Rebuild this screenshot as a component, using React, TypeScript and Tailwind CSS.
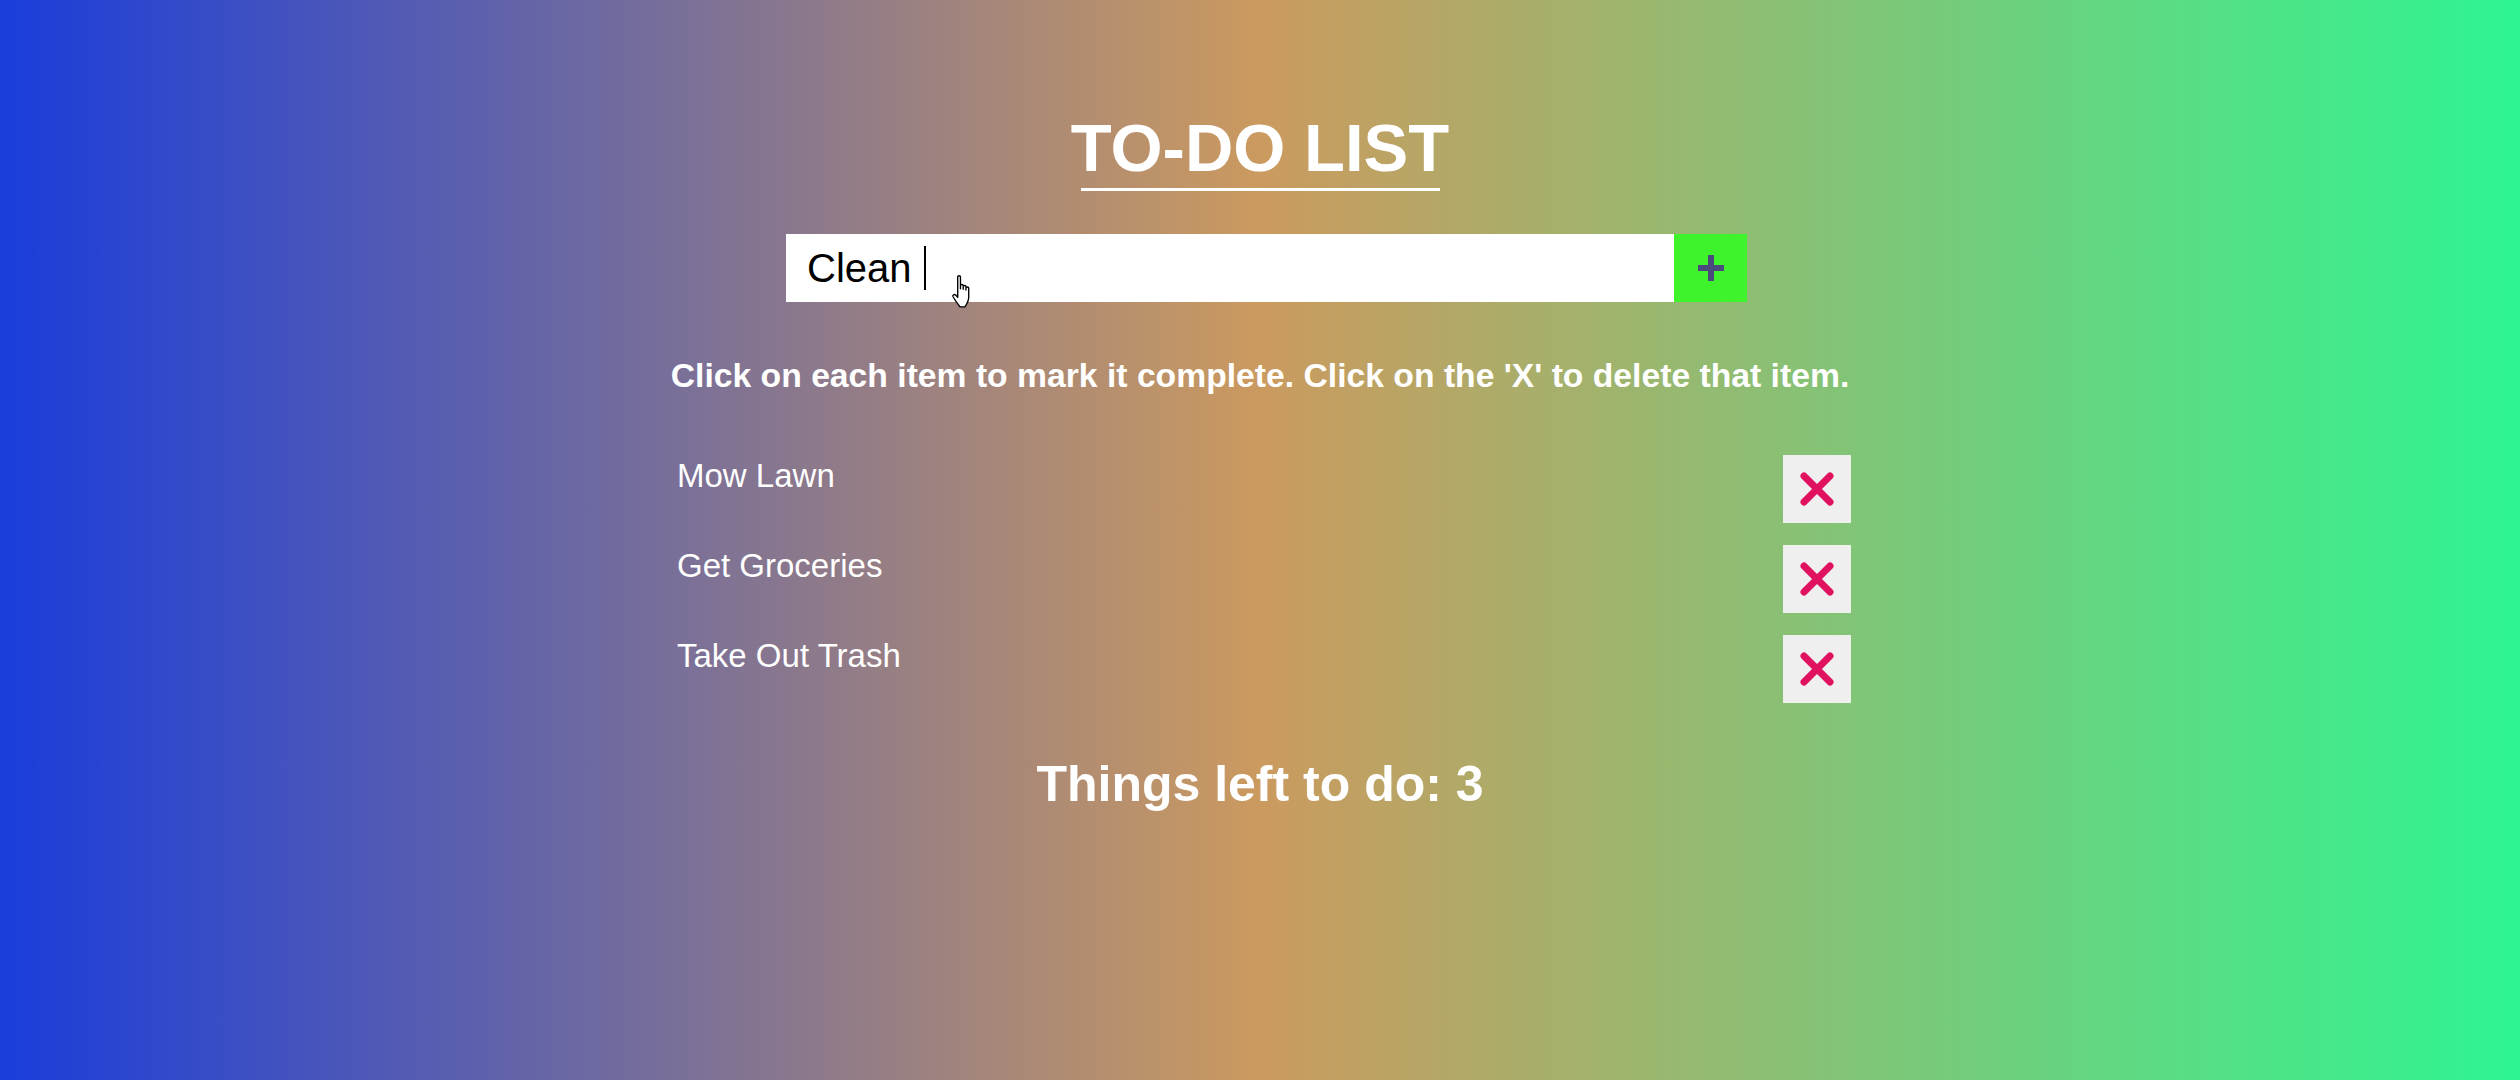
import React, { useState } from "react";

const XIcon = () => (
  <svg width="36" height="36" viewBox="0 0 36 36" fill="none">
    <path
      d="M5 5L31 31M31 5L5 31"
      stroke="#e0115f"
      strokeWidth="7"
      strokeLinecap="round"
    />
  </svg>
);

const PlusIcon = () => (
  <svg width="26" height="26" viewBox="0 0 26 26" fill="none">
    <path d="M13 1V25M1 13H25" stroke="#4b4a7e" strokeWidth="6" strokeLinecap="round" />
  </svg>
);

const HandCursor = () => (
  <svg width="26" height="36" viewBox="0 0 24 34" fill="none">
    <path
      d="M7 2.5c0-1.2 2.6-1.2 2.6 0V14l0-3.2c0-1.2 2.6-1.2 2.6 0v3.6l0-2.6c0-1.2 2.6-1.2 2.6 0v3.4l0-2c0-1.2 2.6-1.2 2.6 0V22c0 4-2.2 7-3.6 9H9.2C7.4 28.8 4.6 25 2.6 21.5c-0.8-1.5 1.3-2.7 2.4-1.6L7 22V2.5z"
      fill="#fff"
      stroke="#000"
      strokeWidth="1.3"
      strokeLinejoin="round"
    />
  </svg>
);

const App = () => {
  const [items] = useState(["Mow Lawn", "Get Groceries", "Take Out Trash"]);
  return (
    <div
      className="min-h-screen w-full bg-[linear-gradient(to_right,#1a3ddb,#cb9a5f,#2ef592)] text-white"
      style={{ fontFamily: '"Liberation Sans", Arial, sans-serif' }}
    >
      <div className="mx-auto flex w-[1182px] flex-col items-center pt-[109px]">
        <h1 className="text-[67px] font-bold leading-[77px]">TO-DO LIST</h1>
        <div className="mt-[2px] h-[3px] w-[359px] bg-white" />

        <div className="mt-[43px] flex w-full justify-center pl-[13px]">
          <div className="relative flex h-[68px] w-[888px] items-center bg-white pl-[21px] text-[40px] text-black">
            <span>Clean</span>
            <span className="ml-[12px] h-[44px] w-[2px] bg-black" />
            <span className="absolute left-[164px] top-[40px]">
              <HandCursor />
            </span>
          </div>
          <button className="flex h-[68px] w-[73px] items-center justify-center bg-[#3ef22c]">
            <PlusIcon />
          </button>
        </div>

        <p className="mt-[54px] whitespace-nowrap text-[33.7px] font-bold leading-[39px]">
          Click on each item to mark it complete. Click on the 'X' to delete that item.
        </p>

        <ul className="mt-[60px] flex w-full flex-col gap-[22px]">
          {items.map((item, idx) => (
            <li key={idx} className="flex items-start justify-between pl-2">
              <span className="pt-[2px] text-[33px] leading-[38px]">{item}</span>
              <button className="flex h-[68px] w-[68px] items-center justify-center bg-[#efefef]">
                <XIcon />
              </button>
            </li>
          ))}
        </ul>

        <h2 className="mt-[52px] text-[50px] font-bold leading-[58px]">
          Things left to do: {items.length}
        </h2>
      </div>
    </div>
  );
};

export default App;
